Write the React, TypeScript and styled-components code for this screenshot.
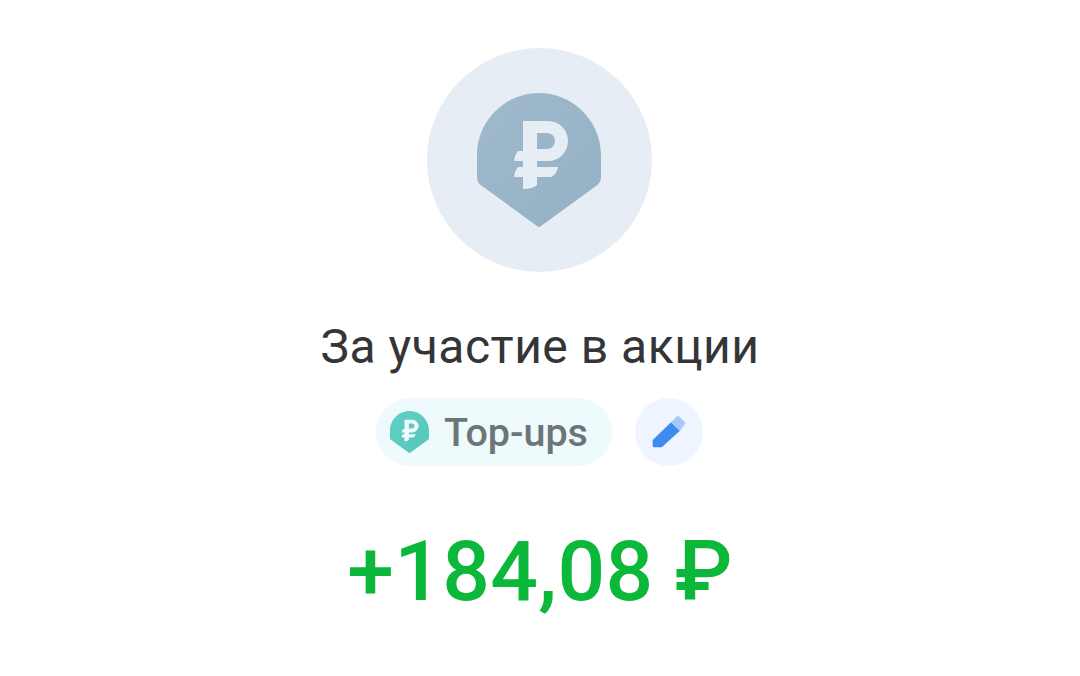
import * as React from "react";
import styled, { createGlobalStyle } from "styled-components";

const GlobalStyle = createGlobalStyle`
  html, body {
    margin: 0;
    background: #ffffff;
  }
`;

const Screen = styled.main`
  display: flex;
  flex-direction: column;
  align-items: center;
  width: 1080px;
  height: 676px;
  padding-top: 48px;
  box-sizing: border-box;
  overflow: hidden;
  font-family: Roboto, "Liberation Sans", sans-serif;
`;

const Avatar = styled.div`
  display: flex;
  align-items: center;
  justify-content: center;
  width: 225px;
  height: 224px;
  padding-right: 1px;
  box-sizing: border-box;
  border-radius: 50%;
  background: #e7edf5;
  margin-left: -1px;
`;

const Title = styled.h1`
  margin: 48px 0 0;
  font-size: 48px;
  line-height: 54px;
  font-weight: 400;
  letter-spacing: 0.5px;
  color: #333537;
`;

const Actions = styled.div`
  display: flex;
  align-items: center;
  gap: 23px;
  margin: 24px 1px 0 0;
`;

const CategoryChip = styled.div`
  display: flex;
  align-items: center;
  gap: 15px;
  width: 236px;
  height: 68px;
  padding-left: 14px;
  box-sizing: border-box;
  border-radius: 34px;
  background: #eefafb;
  font-size: 39.5px;
  font-weight: 500;
  color: #6c7578;
`;

const EditButton = styled.button`
  display: flex;
  align-items: center;
  justify-content: center;
  width: 68px;
  height: 68px;
  padding: 0;
  border: 0;
  border-radius: 50%;
  background: #eff5fe;
`;

const Amount = styled.div`
  margin-top: 58px;
  font-size: 84px;
  line-height: 96px;
  font-weight: 500;
  letter-spacing: 0.3px;
  color: #0cb83a;
`;

type PinProps = { size: number; from: string; to: string; glyph: string };

const RublePin: React.FC<PinProps> = ({ size, from, to, glyph }) => {
  const gradientId = React.useId();
  return (
    <svg width={size} height={(size * 135) / 124} viewBox="0 0 124 135">
      <defs>
        <linearGradient id={gradientId} x1="0" y1="0" x2="1" y2="1">
          <stop offset="0" stopColor={from} />
          <stop offset="1" stopColor={to} />
        </linearGradient>
      </defs>
      <path
        fill={`url(#${gradientId})`}
        d="M62 0C96 0 124 28 124 62V84Q124 90 119 93L64 133Q62 135 60 133L5 93Q0 90 0 84V62C0 28 28 0 62 0Z"
      />
      <path
        fill={glyph}
        fillRule="evenodd"
        d="M46 28H71A20 20 0 0 1 71 68H60V74H81Q80 81 74 84H60V92Q56 96 46 96V84H37Q38 77 41 74H46V68H37Q38 61 41 58H46ZM60 40V56H70A8 8 0 0 0 70 40Z"
      />
    </svg>
  );
};

const PencilIcon: React.FC = () => (
  <svg width="38" height="36" viewBox="0 0 38 36">
    <path fill="#3f8bf2" d="M2.7 26L21 8.3L30 16.7L11.7 33.3H4Q2.7 33.3 2.7 32Z" />
    <path fill="#a5c8fb" d="M21 8.3L27 2.3Q28 1.5 29 2.3L35 8Q36 9 35 10L30 16.7Z" />
  </svg>
);

const App: React.FC = () => (
  <>
    <GlobalStyle />
    <Screen>
      <Avatar>
        <RublePin size={124} from="#9fbacb" to="#94b0c4" glyph="#e7edf5" />
      </Avatar>
      <Title>За участие в акции</Title>
      <Actions>
        <CategoryChip>
          <RublePin size={39} from="#62d0c4" to="#55c6bb" glyph="#eefafb" />
          Top-ups
        </CategoryChip>
        <EditButton>
          <PencilIcon />
        </EditButton>
      </Actions>
      <Amount>+184,08 ₽</Amount>
    </Screen>
  </>
);

export default App;
